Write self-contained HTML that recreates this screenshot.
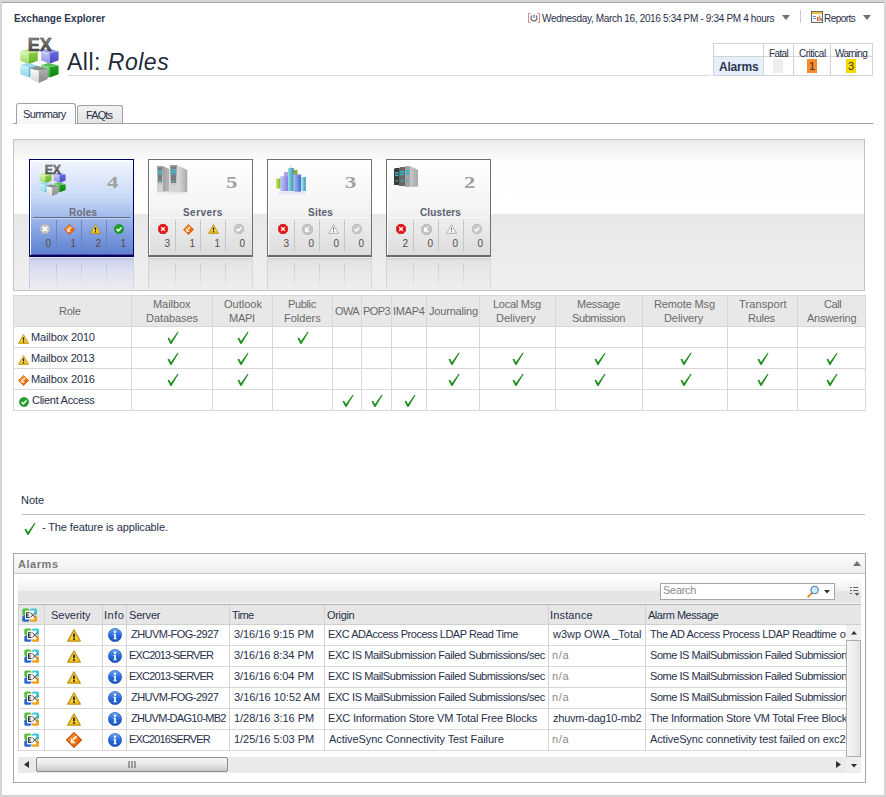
<!DOCTYPE html>
<html><head><meta charset="utf-8">
<style>
*{margin:0;padding:0;box-sizing:border-box}
html,body{width:886px;height:797px;overflow:hidden;background:#d5d5d5;font-family:"Liberation Sans",sans-serif;}
.a{position:absolute}
.t{position:absolute;white-space:nowrap;line-height:1;font-size:11px;color:#27304a}
</style></head><body>


<svg width="0" height="0" style="position:absolute">
<defs>
 <linearGradient id="gEX" x1="0" y1="0" x2="0" y2="1"><stop offset="0" stop-color="#a8a8a8"/><stop offset=".55" stop-color="#606060"/><stop offset="1" stop-color="#404040"/></linearGradient>
 <linearGradient id="gG" x1="0" y1="0" x2="1" y2="0"><stop offset="0" stop-color="#c8f090"/><stop offset="1" stop-color="#70c030"/></linearGradient>
 <linearGradient id="gB" x1="0" y1="0" x2="1" y2="0"><stop offset="0" stop-color="#b8b8f8"/><stop offset="1" stop-color="#5050d0"/></linearGradient>
 <linearGradient id="gC" x1="0" y1="0" x2="1" y2="0"><stop offset="0" stop-color="#c0ecf8"/><stop offset="1" stop-color="#50b0d0"/></linearGradient>
 <linearGradient id="gD" x1="0" y1="0" x2="1" y2="0"><stop offset="0" stop-color="#60d060"/><stop offset="1" stop-color="#109010"/></linearGradient>
 <linearGradient id="gS" x1="0" y1="0" x2="1" y2="0"><stop offset="0" stop-color="#f8f8f8"/><stop offset="1" stop-color="#808080"/></linearGradient>
 <linearGradient id="gGl" x1="0" y1="0" x2="0" y2="1"><stop offset="0" stop-color="#d8f8b0"/><stop offset="1" stop-color="#98d860"/></linearGradient>
 <linearGradient id="gGr" x1="0" y1="0" x2="0" y2="1"><stop offset="0" stop-color="#90d048"/><stop offset="1" stop-color="#60b028"/></linearGradient>
 <linearGradient id="gBl" x1="0" y1="0" x2="0" y2="1"><stop offset="0" stop-color="#c8c8f8"/><stop offset="1" stop-color="#9090e8"/></linearGradient>
 <linearGradient id="gBr" x1="0" y1="0" x2="0" y2="1"><stop offset="0" stop-color="#6a6ae0"/><stop offset="1" stop-color="#4848c0"/></linearGradient>
 <linearGradient id="gCl" x1="0" y1="0" x2="0" y2="1"><stop offset="0" stop-color="#c8eef8"/><stop offset="1" stop-color="#90d4ec"/></linearGradient>
 <linearGradient id="gCr" x1="0" y1="0" x2="0" y2="1"><stop offset="0" stop-color="#70c4e0"/><stop offset="1" stop-color="#48a8c8"/></linearGradient>
 <linearGradient id="gDl" x1="0" y1="0" x2="0" y2="1"><stop offset="0" stop-color="#70d870"/><stop offset="1" stop-color="#30a830"/></linearGradient>
 <linearGradient id="gDr" x1="0" y1="0" x2="0" y2="1"><stop offset="0" stop-color="#28a028"/><stop offset="1" stop-color="#088008"/></linearGradient>
 <linearGradient id="gSl" x1="0" y1="0" x2="0" y2="1"><stop offset="0" stop-color="#fafafa"/><stop offset="1" stop-color="#d8d8d8"/></linearGradient>
 <linearGradient id="gSr" x1="0" y1="0" x2="0" y2="1"><stop offset="0" stop-color="#b0b0b0"/><stop offset="1" stop-color="#888888"/></linearGradient>
 <symbol id="cubes" viewBox="0 0 44 50">
  <path d="M2.3 15.2 L10.8 17.2 L10.8 28.3 L2.3 24.7Z" fill="url(#gGl)"/><path d="M10.8 17.2 L19.8 15.7 L19.8 24.7 L10.8 28.3Z" fill="url(#gGr)"/><path d="M2.3 15.2 L9.5 13.0 L19.8 15.7 L10.8 17.2Z" fill="#c8ec98"/><path d="M3.3 17.0 L9.3 18.5" stroke="#fff" stroke-opacity=".35" stroke-width="1"/><path d="M23.1 14.7 L31.6 16.7 L31.6 27.8 L23.1 24.2Z" fill="url(#gBl)"/><path d="M31.6 16.7 L40.6 15.2 L40.6 24.2 L31.6 27.8Z" fill="url(#gBr)"/><path d="M23.1 14.7 L30.3 12.5 L40.6 15.2 L31.6 16.7Z" fill="#9898e8"/><path d="M24.1 16.5 L30.1 18.0" stroke="#fff" stroke-opacity=".35" stroke-width="1"/><path d="M2.3 29.1 L10.8 31.0 L10.8 41.6 L2.3 38.2Z" fill="url(#gCl)"/><path d="M10.8 31.0 L19.8 29.6 L19.8 38.2 L10.8 41.6Z" fill="url(#gCr)"/><path d="M2.3 29.1 L9.5 27.0 L19.8 29.6 L10.8 31.0Z" fill="#98d8ec"/><path d="M3.3 30.8 L9.3 32.2" stroke="#fff" stroke-opacity=".35" stroke-width="1"/><path d="M23.1 29.1 L31.6 31.0 L31.6 41.6 L23.1 38.2Z" fill="url(#gDl)"/><path d="M31.6 31.0 L40.6 29.6 L40.6 38.2 L31.6 41.6Z" fill="url(#gDr)"/><path d="M23.1 29.1 L30.3 27.0 L40.6 29.6 L31.6 31.0Z" fill="#58c058"/><path d="M24.1 30.8 L30.1 32.2" stroke="#fff" stroke-opacity=".35" stroke-width="1"/><path d="M12.3 32.4 L20.8 34.6 L20.8 46.9 L12.3 42.9Z" fill="url(#gSl)"/><path d="M20.8 34.6 L29.8 33.0 L29.8 42.9 L20.8 46.9Z" fill="url(#gSr)"/><path d="M12.3 32.4 L19.5 30.0 L29.8 33.0 L20.8 34.6Z" fill="#8c8c8c"/><path d="M13.3 34.4 L19.3 36.1" stroke="#fff" stroke-opacity=".35" stroke-width="1"/>
  <text x="21.8" y="15" text-anchor="middle" font-family="Liberation Sans" font-weight="bold" font-size="18" fill="url(#gEX)" stroke="#303030" stroke-width=".5">EX</text>
 </symbol>
 <symbol id="xgray" viewBox="0 0 10 10"><path d="M3 0.3H7L9.7 3V7L7 9.7H3L0.3 7V3Z" fill="#c4c4c4" stroke="#a8a8a8" stroke-width=".5"/><path d="M2.8 2.8L7.2 7.2M7.2 2.8L2.8 7.2" stroke="#fff" stroke-width="1.7"/></symbol>
 <symbol id="xred" viewBox="0 0 10 10"><path d="M3 0.3H7L9.7 3V7L7 9.7H3L0.3 7V3Z" fill="#e81818" stroke="#b00000" stroke-width=".5"/><path d="M3.2 3.2L6.8 6.8M6.8 3.2L3.2 6.8" stroke="#fff" stroke-width="1.3"/></symbol>
 <linearGradient id="gOr" x1="0" y1="0" x2="1" y2="1"><stop offset="0" stop-color="#ffb040"/><stop offset=".5" stop-color="#f67810"/><stop offset="1" stop-color="#e85800"/></linearGradient>
 <symbol id="diaor" viewBox="0 0 12 12"><path d="M6 0.5L11.5 6L6 11.5L0.5 6Z" fill="url(#gOr)" stroke="#c84c00" stroke-width=".8" stroke-linejoin="round"/><path d="M7.8 3.3L5.3 5.8" stroke="#fff" stroke-width="1.4"/><path d="M3.6 4.6V8.4H7.4Z" fill="#fff"/></symbol>
 <symbol id="diagray" viewBox="0 0 12 12"><path d="M3.5 0.5H8.5L11.5 3.5V8.5L8.5 11.5H3.5L0.5 8.5V3.5Z" fill="#c4c4c4" stroke="#a8a8a8" stroke-width=".6"/><path d="M7.6 3.2L5.2 5.6M4 4.6V7.8H7.2Z" stroke="#fff" stroke-width="1.3" fill="#fff"/></symbol>
 <linearGradient id="gWn" x1="0" y1="0" x2="0" y2="1"><stop offset="0" stop-color="#fff0a0"/><stop offset=".45" stop-color="#fbd840"/><stop offset="1" stop-color="#f0c020"/></linearGradient>
 <symbol id="warn" viewBox="0 0 12 11"><path d="M6 0.7L11.4 10.3H0.6Z" fill="url(#gWn)" stroke="#c09010" stroke-width="1" stroke-linejoin="round"/><path d="M6 3.7V6.9" stroke="#111" stroke-width="1.4"/><rect x="5.3" y="7.8" width="1.4" height="1.4" fill="#111"/></symbol>
 <symbol id="warngray" viewBox="0 0 12 11"><path d="M6 0.8L11.4 10.3H0.6Z" fill="#f6f6f6" stroke="#a8a8a8" stroke-width=".9" stroke-linejoin="round"/><path d="M6 3.8V6.9" stroke="#707070" stroke-width="1.1"/><rect x="5.45" y="7.9" width="1.1" height="1.1" fill="#707070"/></symbol>
 <symbol id="chkgreen" viewBox="0 0 10 10"><circle cx="5" cy="5" r="4.6" fill="#1ea12a" stroke="#0c7a14" stroke-width=".5"/><path d="M2.6 5.1L4.3 6.8L7.5 3.4" stroke="#fff" stroke-width="1.5" fill="none"/></symbol>
 <symbol id="chkgray" viewBox="0 0 10 10"><path d="M3 0.3H7L9.7 3V7L7 9.7H3L0.3 7V3Z" fill="#c8c8c8" stroke="#a8a8a8" stroke-width=".5"/><path d="M2.6 5.1L4.3 6.8L7.5 3.4" stroke="#fff" stroke-width="1.5" fill="none"/></symbol>
 <symbol id="check" viewBox="0 0 13 13"><path d="M1.6 7.6 Q2.3 6.3 3.3 7.1 L5 9.9 L11.6 0.8 Q12.6 0.6 12.4 1.6 L5.8 12.6 Q5 13.6 4.3 12.7Z" fill="#1f901f"/></symbol>
 <linearGradient id="gInfo" x1="0" y1="0" x2="0" y2="1"><stop offset="0" stop-color="#6aa8f8"/><stop offset=".5" stop-color="#2a6ae0"/><stop offset="1" stop-color="#1850c0"/></linearGradient>
 <symbol id="info" viewBox="0 0 14 14"><circle cx="7" cy="7" r="6.6" fill="url(#gInfo)" stroke="#1848a8" stroke-width=".6"/><circle cx="7" cy="3.7" r="1.2" fill="#fff"/><path d="M5.3 5.8H7.9V10.4H9V11.3H5.2V10.4H6.2V6.7H5.3Z" fill="#fff"/></symbol>
 <symbol id="exg" viewBox="0 0 15 14">
  <rect x="0.3" y="0.4" width="7" height="6.6" rx="1.6" fill="#50c038"/><rect x="8" y="0.4" width="7" height="6.6" rx="1.6" fill="#38c8d8"/>
  <rect x="0.3" y="7.2" width="7" height="6.6" rx="1.6" fill="#2a64d0"/><rect x="8" y="7.2" width="7" height="6.6" rx="1.6" fill="#f0a010"/>
  <rect x="3" y="2.6" width="4.5" height="4.6" rx="1" fill="#fff"/><rect x="8" y="2.6" width="4.5" height="4.6" rx="1" fill="#fff"/>
  <rect x="3" y="7" width="4.5" height="4.4" rx="1" fill="#fff"/><rect x="8" y="7" width="4.5" height="4.4" rx="1" fill="#fff"/>
  <path d="M7.3 4.7H4.6V9.4H7.3M4.6 7H6.9" stroke="#2a2a2a" stroke-width="1.1" fill="none"/>
  <path d="M8.4 4.5L13 9.5M13 4.5L8.4 9.5" stroke="#2a2a2a" stroke-width=".9" fill="none"/>
 </symbol>
</defs></svg>

<div class="a" style="left:2px;top:2px;width:882px;height:793px;background:#fff;border-top:1px solid #a3a3a3;"></div>
<div class="t" id="appt" style="left:14px;top:14px;font-size:10px;color:#2c3650;font-weight:bold;letter-spacing:0.036px;">Exchange Explorer</div>
<svg class="a" style="left:528px;top:13px" width="12" height="10" viewBox="0 0 12 10">
 <path d="M2.5 0.5H0.5V9.5H2.5M9.5 0.5H11.5V9.5H9.5" fill="none" stroke="#d88888" stroke-width="1"/>
 <path d="M4.2 2.6A3 3 0 1 0 7.8 2.6" fill="none" stroke="#6a6a6a" stroke-width="1.2"/>
 <path d="M6 1.5V5" fill="none" stroke="#3a6ac8" stroke-width="1.1"/></svg>
<div class="t" id="datet" style="left:542px;top:14px;font-size:10px;color:#27304a;letter-spacing:-0.334px;">Wednesday, March 16, 2016 5:34 PM - 9:34 PM 4 hours</div>
<svg class="a" style="left:782px;top:15px" width="8" height="5"><path d="M0 0H8L4 5Z" fill="#707070"/></svg>
<div class="a" style="left:800px;top:10px;width:1px;height:13px;background:#c8c8c8"></div>
<svg class="a" style="left:811px;top:11px" width="12" height="12" viewBox="0 0 12 12">
 <rect x="0.5" y="0.5" width="11" height="11" fill="#fafafa" stroke="#6a6a6a"/>
 <rect x="1" y="1" width="10" height="2" fill="#f0c040"/>
 <rect x="2" y="5" width="3" height="1" fill="#6090d0"/><rect x="2" y="7" width="3" height="1" fill="#6090d0"/>
 <rect x="6" y="6" width="1.5" height="4" fill="#e05030"/><rect x="8" y="4.5" width="1.5" height="5.5" fill="#f0a030"/><rect x="9.6" y="7" width="1.2" height="3" fill="#5080c0"/></svg>
<div class="t" id="rept" style="left:824px;top:14px;font-size:10px;color:#27304a;letter-spacing:-0.55px;">Reports</div>
<svg class="a" style="left:863px;top:15px" width="8" height="5"><path d="M0 0H8L4 5Z" fill="#707070"/></svg>
<svg class="a" style="left:18px;top:36px;" width="44" height="50"><use href="#cubes" width="44" height="50"/></svg>
<div class="t" id="title" style="left:67px;top:51px;font-size:23px;color:#222a3a;letter-spacing:0.5px;">All: <i>Roles</i></div>
<div class="a" style="left:68px;top:75px;width:643px;height:1px;background:#dcdcdc"></div>
<div class="a" style="left:713px;top:43px;width:160px;height:33px;border:1px solid #d4d4d4"></div>
<div class="a" style="left:713px;top:56px;width:160px;height:1px;background:#d4d4d4"></div>
<div class="a" style="left:714px;top:57px;width:49px;height:18px;background:#e6f0fc"></div>
<div class="a" style="left:763px;top:43px;width:1px;height:33px;background:#d4d4d4"></div>
<div class="a" style="left:793px;top:43px;width:1px;height:33px;background:#d4d4d4"></div>
<div class="a" style="left:830px;top:43px;width:1px;height:33px;background:#d4d4d4"></div>
<div class="t" id="alt" style="left:719px;top:61px;font-size:12px;color:#2c3650;font-weight:bold;letter-spacing:-0.216px;">Alarms</div>
<div class="t" id="sfatal" style="left:769px;top:49px;font-size:10px;color:#27304a;letter-spacing:-0.628px;">Fatal</div>
<div class="t" id="scrit" style="left:799px;top:49px;font-size:10px;color:#27304a;letter-spacing:-0.488px;">Critical</div>
<div class="t" id="swarn" style="left:835px;top:49px;font-size:10px;color:#27304a;letter-spacing:-0.69px;">Warning</div>
<div class="a" style="left:773px;top:59px;width:10px;height:14px;background:#eeeeee"></div>
<div class="a" style="left:807px;top:59px;width:10px;height:14px;background:#f68c2c"></div>
<div class="a" style="left:846px;top:59px;width:10px;height:14px;background:#f8d800"></div>
<div class="t" id="s1" style="left:809px;top:61px;font-size:11px;color:#333;">1</div>
<div class="t" id="s3" style="left:848px;top:61px;font-size:11px;color:#333;">3</div>
<div class="a" style="left:13px;top:123px;width:860px;height:1px;background:#a0a2aa"></div>
<div class="a" style="left:16px;top:103px;width:60px;height:21px;border:1px solid #a0a2aa;border-bottom:none;border-radius:3px 3px 0 0;background:linear-gradient(#fff,#f6f6f6)"></div>
<div class="a" style="left:77px;top:105px;width:46px;height:18px;border:1px solid #a0a2aa;border-bottom:none;border-radius:3px 3px 0 0;background:linear-gradient(#f2f2f2,#e4e4e4)"></div>
<div class="t" id="tab1" style="left:23px;top:109px;font-size:11px;color:#27304a;letter-spacing:-0.63px;">Summary</div>
<div class="t" id="tab2" style="left:86px;top:110px;font-size:11px;color:#27304a;letter-spacing:-0.899px;">FAQts</div>
<div class="a" style="left:13px;top:139px;width:852px;height:152px;border:1px solid #c4c4c4;background:linear-gradient(#ebebeb 0px,#fdfdfd 22px,#fff 74px,#e8e8e8 74px,#efefef 100%)"></div>
<div class="a" style="left:29px;top:159px;width:105px;height:98px;background:linear-gradient(#f2f7ff 0%,#c8d8f6 40%,#a4bcec 58%,#7c9ade 80%,#5d82d0 calc(100% - 1px),#5048a0 calc(100% - 1px));border:1px solid #000066;border-bottom:2px solid #000060;box-shadow:inset 1px 1px 0 #fff"></div>
<div class="a" style="left:29px;top:258px;width:105px;height:31px;background:linear-gradient(#b4b8d8 0px,#ccd2ec 2px,#dde0f0 12px,#ebebf0 100%);border-left:1px solid #c8cce0;border-right:1px solid #d0d4e4"></div>
<div class="a" style="left:56px;top:263px;width:1px;height:23px;background:linear-gradient(#b8c0e0,#e4e6f0)"></div>
<div class="a" style="left:81px;top:263px;width:1px;height:23px;background:linear-gradient(#b8c0e0,#e4e6f0)"></div>
<div class="a" style="left:106px;top:263px;width:1px;height:23px;background:linear-gradient(#b8c0e0,#e4e6f0)"></div>
<div class="t" id="num_Roles" style="left:107px;top:174px;font-size:17px;color:#a0a0a0;font-weight:bold;font-family:'Liberation Serif',serif;transform:scaleX(1.33);transform-origin:0 0;">4</div>
<div class="t" id="lab_Roles" style="left:69px;top:208px;font-size:10px;color:#6e6e78;font-weight:bold;letter-spacing:0.206px;">Roles</div>
<div class="a" style="left:33px;top:217px;width:97px;height:1px;background:#606878"></div>
<div class="a" style="left:33px;top:218px;width:97px;height:1px;background:#c4d4f4"></div>
<div class="a" style="left:56px;top:220px;width:1px;height:31px;background:#6a84c0"></div>
<div class="a" style="left:81px;top:220px;width:1px;height:31px;background:#6a84c0"></div>
<div class="a" style="left:106px;top:220px;width:1px;height:31px;background:#6a84c0"></div>
<svg class="a" style="left:40px;top:224px;" width="10" height="10"><use href="#xgray" width="10" height="10"/></svg>
<div class="t" style="left:45px;top:239px;font-size:10px;color:#5a4a3a;text-align:right;width:6px;">0</div>
<svg class="a" style="left:64px;top:224px;" width="11" height="11"><use href="#diaor" width="11" height="11"/></svg>
<div class="t" style="left:70px;top:239px;font-size:10px;color:#5a4a3a;text-align:right;width:6px;">1</div>
<svg class="a" style="left:90px;top:224px;" width="11" height="10"><use href="#warn" width="11" height="10"/></svg>
<div class="t" style="left:95px;top:239px;font-size:10px;color:#5a4a3a;text-align:right;width:6px;">2</div>
<svg class="a" style="left:114px;top:224px;" width="10" height="10"><use href="#chkgreen" width="10" height="10"/></svg>
<div class="t" style="left:120px;top:239px;font-size:10px;color:#5a4a3a;text-align:right;width:6px;">1</div>
<div class="a" style="left:148px;top:159px;width:105px;height:98px;background:linear-gradient(#ffffff 0%,#f4f4f4 50%,#dcdcdc 100%);border:1px solid #707074;border-bottom:2px solid #6a6a6e;box-shadow:inset 1px 1px 0 #fff"></div>
<div class="a" style="left:148px;top:258px;width:105px;height:31px;background:linear-gradient(#cfcfcf 0px,#e2e2e2 2px,#e8e8e8 12px,#ededed 100%);border-left:1px solid #d4d4d4;border-right:1px solid #d8d8d8"></div>
<div class="a" style="left:175px;top:263px;width:1px;height:23px;background:linear-gradient(#cacaca,#e6e6e6)"></div>
<div class="a" style="left:200px;top:263px;width:1px;height:23px;background:linear-gradient(#cacaca,#e6e6e6)"></div>
<div class="a" style="left:225px;top:263px;width:1px;height:23px;background:linear-gradient(#cacaca,#e6e6e6)"></div>
<div class="t" id="num_Servers" style="left:226px;top:174px;font-size:17px;color:#a0a0a0;font-weight:bold;font-family:'Liberation Serif',serif;transform:scaleX(1.33);transform-origin:0 0;">5</div>
<div class="t" id="lab_Servers" style="left:183px;top:208px;font-size:10px;color:#5a6070;font-weight:bold;letter-spacing:0.45px;">Servers</div>
<div class="a" style="left:152px;top:217px;width:97px;height:1px;background:#fafafa"></div>
<div class="a" style="left:175px;top:220px;width:1px;height:31px;background:#c6c6c6"></div>
<div class="a" style="left:200px;top:220px;width:1px;height:31px;background:#c6c6c6"></div>
<div class="a" style="left:225px;top:220px;width:1px;height:31px;background:#c6c6c6"></div>
<svg class="a" style="left:158px;top:224px;" width="10" height="10"><use href="#xred" width="10" height="10"/></svg>
<div class="t" style="left:164px;top:239px;font-size:10px;color:#5a4a4a;text-align:right;width:6px;">3</div>
<svg class="a" style="left:183px;top:224px;" width="11" height="11"><use href="#diaor" width="11" height="11"/></svg>
<div class="t" style="left:189px;top:239px;font-size:10px;color:#5a4a4a;text-align:right;width:6px;">1</div>
<svg class="a" style="left:208px;top:224px;" width="11" height="10"><use href="#warn" width="11" height="10"/></svg>
<div class="t" style="left:214px;top:239px;font-size:10px;color:#5a4a4a;text-align:right;width:6px;">1</div>
<svg class="a" style="left:234px;top:224px;" width="10" height="10"><use href="#chkgray" width="10" height="10"/></svg>
<div class="t" style="left:239px;top:239px;font-size:10px;color:#5a4a4a;text-align:right;width:6px;">0</div>
<div class="a" style="left:267px;top:159px;width:105px;height:98px;background:linear-gradient(#ffffff 0%,#f4f4f4 50%,#dcdcdc 100%);border:1px solid #707074;border-bottom:2px solid #6a6a6e;box-shadow:inset 1px 1px 0 #fff"></div>
<div class="a" style="left:267px;top:258px;width:105px;height:31px;background:linear-gradient(#cfcfcf 0px,#e2e2e2 2px,#e8e8e8 12px,#ededed 100%);border-left:1px solid #d4d4d4;border-right:1px solid #d8d8d8"></div>
<div class="a" style="left:294px;top:263px;width:1px;height:23px;background:linear-gradient(#cacaca,#e6e6e6)"></div>
<div class="a" style="left:319px;top:263px;width:1px;height:23px;background:linear-gradient(#cacaca,#e6e6e6)"></div>
<div class="a" style="left:344px;top:263px;width:1px;height:23px;background:linear-gradient(#cacaca,#e6e6e6)"></div>
<div class="t" id="num_Sites" style="left:345px;top:174px;font-size:17px;color:#a0a0a0;font-weight:bold;font-family:'Liberation Serif',serif;transform:scaleX(1.33);transform-origin:0 0;">3</div>
<div class="t" id="lab_Sites" style="left:308px;top:208px;font-size:10px;color:#5a6070;font-weight:bold;letter-spacing:0.225px;">Sites</div>
<div class="a" style="left:271px;top:217px;width:97px;height:1px;background:#fafafa"></div>
<div class="a" style="left:294px;top:220px;width:1px;height:31px;background:#c6c6c6"></div>
<div class="a" style="left:319px;top:220px;width:1px;height:31px;background:#c6c6c6"></div>
<div class="a" style="left:344px;top:220px;width:1px;height:31px;background:#c6c6c6"></div>
<svg class="a" style="left:278px;top:224px;" width="10" height="10"><use href="#xred" width="10" height="10"/></svg>
<div class="t" style="left:283px;top:239px;font-size:10px;color:#5a4a4a;text-align:right;width:6px;">3</div>
<svg class="a" style="left:302px;top:224px;" width="11" height="11"><use href="#diagray" width="11" height="11"/></svg>
<div class="t" style="left:308px;top:239px;font-size:10px;color:#5a4a4a;text-align:right;width:6px;">0</div>
<svg class="a" style="left:328px;top:224px;" width="11" height="10"><use href="#warngray" width="11" height="10"/></svg>
<div class="t" style="left:333px;top:239px;font-size:10px;color:#5a4a4a;text-align:right;width:6px;">0</div>
<svg class="a" style="left:352px;top:224px;" width="10" height="10"><use href="#chkgray" width="10" height="10"/></svg>
<div class="t" style="left:358px;top:239px;font-size:10px;color:#5a4a4a;text-align:right;width:6px;">0</div>
<div class="a" style="left:386px;top:159px;width:105px;height:98px;background:linear-gradient(#ffffff 0%,#f4f4f4 50%,#dcdcdc 100%);border:1px solid #707074;border-bottom:2px solid #6a6a6e;box-shadow:inset 1px 1px 0 #fff"></div>
<div class="a" style="left:386px;top:258px;width:105px;height:31px;background:linear-gradient(#cfcfcf 0px,#e2e2e2 2px,#e8e8e8 12px,#ededed 100%);border-left:1px solid #d4d4d4;border-right:1px solid #d8d8d8"></div>
<div class="a" style="left:413px;top:263px;width:1px;height:23px;background:linear-gradient(#cacaca,#e6e6e6)"></div>
<div class="a" style="left:438px;top:263px;width:1px;height:23px;background:linear-gradient(#cacaca,#e6e6e6)"></div>
<div class="a" style="left:463px;top:263px;width:1px;height:23px;background:linear-gradient(#cacaca,#e6e6e6)"></div>
<div class="t" id="num_Clusters" style="left:464px;top:174px;font-size:17px;color:#a0a0a0;font-weight:bold;font-family:'Liberation Serif',serif;transform:scaleX(1.33);transform-origin:0 0;">2</div>
<div class="t" id="lab_Clusters" style="left:420px;top:208px;font-size:10px;color:#5a6070;font-weight:bold;letter-spacing:0.128px;">Clusters</div>
<div class="a" style="left:390px;top:217px;width:97px;height:1px;background:#fafafa"></div>
<div class="a" style="left:413px;top:220px;width:1px;height:31px;background:#c6c6c6"></div>
<div class="a" style="left:438px;top:220px;width:1px;height:31px;background:#c6c6c6"></div>
<div class="a" style="left:463px;top:220px;width:1px;height:31px;background:#c6c6c6"></div>
<svg class="a" style="left:396px;top:224px;" width="10" height="10"><use href="#xred" width="10" height="10"/></svg>
<div class="t" style="left:402px;top:239px;font-size:10px;color:#5a4a4a;text-align:right;width:6px;">2</div>
<svg class="a" style="left:421px;top:224px;" width="11" height="11"><use href="#diagray" width="11" height="11"/></svg>
<div class="t" style="left:427px;top:239px;font-size:10px;color:#5a4a4a;text-align:right;width:6px;">0</div>
<svg class="a" style="left:446px;top:224px;" width="11" height="10"><use href="#warngray" width="11" height="10"/></svg>
<div class="t" style="left:452px;top:239px;font-size:10px;color:#5a4a4a;text-align:right;width:6px;">0</div>
<svg class="a" style="left:472px;top:224px;" width="10" height="10"><use href="#chkgray" width="10" height="10"/></svg>
<div class="t" style="left:477px;top:239px;font-size:10px;color:#5a4a4a;text-align:right;width:6px;">0</div>
<svg class="a" style="left:38.4px;top:163.5px" width="30" height="34"><use href="#cubes" width="30" height="34"/></svg>
<svg class="a" style="left:150px;top:160px" width="45" height="38" viewBox="150 160 45 38">
 <defs>
  <linearGradient id="svS1" x1="0" x2="1"><stop offset="0" stop-color="#8a8a8a"/><stop offset="1" stop-color="#b8b8b8"/></linearGradient>
  <linearGradient id="svS2" x1="0" x2="1"><stop offset="0" stop-color="#e8e8e8"/><stop offset=".6" stop-color="#d0d0d0"/><stop offset="1" stop-color="#a8a8a8"/></linearGradient>
  <linearGradient id="svF" x1="0" y1="0" x2="0" y2="1"><stop offset="0" stop-color="#9a9a9a"/><stop offset=".6" stop-color="#c8c8c8"/><stop offset="1" stop-color="#d8d8d8"/></linearGradient>
 </defs>
 <path d="M157 166.5 L162.5 166 L169.5 169 L169.5 191.5 L157 191.5Z" fill="url(#svS1)"/>
 <rect x="157" y="166.3" width="6" height="25.2" fill="url(#svF)"/>
 <rect x="158" y="167.5" width="4" height="15" fill="#7c7c7c"/>
 <rect x="158" y="170" width="4" height="1.2" fill="#40c4d8"/><rect x="158" y="172" width="4" height="1.2" fill="#40c4d8"/><rect x="158" y="174" width="4" height="1" fill="#40b0c8"/>
 <rect x="159" y="180.5" width="2" height="1.5" fill="#40c4d8"/>
 <path d="M170 165 L176.5 164.8 L187.3 170 L187.3 192 L177 193 L170 192.5Z" fill="url(#svS2)"/>
 <rect x="170" y="165" width="7" height="27.8" fill="url(#svF)"/>
 <rect x="171" y="166.5" width="5" height="16.5" fill="#7a7a7a"/>
 <rect x="171" y="169" width="5" height="1.4" fill="#40c4d8"/><rect x="171" y="171.3" width="5" height="1.4" fill="#40c4d8"/><rect x="171" y="173.5" width="5" height="1.2" fill="#40b0c8"/>
 <rect x="172.5" y="180.5" width="2" height="1.6" fill="#40c4d8"/>
 <rect x="157" y="192" width="30" height="3" fill="#e8e8e8" opacity=".6"/>
</svg>
<svg class="a" style="left:272px;top:162px" width="38" height="34" viewBox="272 162 38 34">
 <defs>
  <linearGradient id="stA" x1="0" x2="1"><stop offset="0" stop-color="#c8c8f8"/><stop offset="1" stop-color="#7878d8"/></linearGradient>
  <linearGradient id="stB" x1="0" x2="1"><stop offset="0" stop-color="#98e0ec"/><stop offset="1" stop-color="#3890a8"/></linearGradient>
  <linearGradient id="stC" x1="0" x2="1"><stop offset="0" stop-color="#a8c0f8"/><stop offset="1" stop-color="#4868c8"/></linearGradient>
  <linearGradient id="stD" x1="0" x2="1"><stop offset="0" stop-color="#b8eef8"/><stop offset="1" stop-color="#3898b8"/></linearGradient>
  <linearGradient id="stE" x1="0" x2="1"><stop offset="0" stop-color="#c0f070"/><stop offset="1" stop-color="#70b020"/></linearGradient>
 </defs>
 <rect x="276" y="178.5" width="5" height="10" fill="url(#stE)"/>
 <rect x="284" y="172" width="4.5" height="5" fill="#b0a0e0"/>
 <rect x="293.5" y="170" width="4" height="5" fill="#90a840"/>
 <rect x="280.2" y="176.3" width="8.6" height="14.8" fill="url(#stA)"/>
 <rect x="290.2" y="165" width="1.6" height="3" fill="#c8f0f8"/>
 <rect x="288" y="168" width="5.8" height="23" fill="url(#stB)"/>
 <rect x="293.5" y="174.5" width="7.5" height="17.3" fill="url(#stC)"/>
 <rect x="301" y="177" width="4.8" height="14" fill="url(#stD)"/>
 <rect x="278" y="191.5" width="28" height="3" fill="#c8d0f0" opacity=".35"/>
</svg>
<svg class="a" style="left:390px;top:162px" width="32" height="28" viewBox="390 162 32 28">
 <defs>
  <linearGradient id="clS" x1="0" x2="1"><stop offset="0" stop-color="#dcdcdc"/><stop offset="1" stop-color="#a8a8a8"/></linearGradient>
 </defs>
 <path d="M394 169 L395.5 168 L399 168 L399 185 L394 185Z" fill="#3a3a3a"/>
 <path d="M399 168 L400.5 167 L405 167 L405 186 L399 186Z" fill="#686868"/>
 <path d="M405 166.2 L410 166 L418 170 L418 186.6 L410 187 L405 186.6Z" fill="url(#clS)"/>
 <rect x="405" y="166.2" width="5" height="20.6" fill="#a4a4a4"/>
 <rect x="395" y="172" width="3.5" height="1.6" fill="#2ab8d0"/><rect x="395" y="174.5" width="3.5" height="1.6" fill="#2ab8d0"/><rect x="396" y="180" width="1.6" height="1.6" fill="#2ab8d0"/>
 <rect x="400" y="171" width="4.2" height="1.6" fill="#2ab8d0"/><rect x="400" y="173.6" width="4.2" height="1.6" fill="#2ab8d0"/><rect x="401" y="180" width="2.4" height="1.4" fill="#2ab8d0"/>
 <rect x="406" y="170" width="3.6" height="1.8" fill="#2ab8d0"/><rect x="406" y="172.8" width="3.6" height="1.8" fill="#2ab8d0"/><rect x="406.5" y="180" width="2.6" height="1.4" fill="#2ab8d0"/>
</svg>
<div class="a" style="left:13px;top:295px;width:853px;height:116px;border:1px solid #d8d8d8;background:#fff"></div>
<div class="a" style="left:14px;top:296px;width:851px;height:30px;background:#e8e8e8"></div>
<div class="a" style="left:13px;top:326px;width:853px;height:1px;background:#d8d8d8"></div>
<div class="a" style="left:13px;top:347px;width:853px;height:1px;background:#d8d8d8"></div>
<div class="a" style="left:13px;top:368px;width:853px;height:1px;background:#d8d8d8"></div>
<div class="a" style="left:13px;top:389px;width:853px;height:1px;background:#d8d8d8"></div>
<div class="a" style="left:131px;top:295px;width:1px;height:116px;background:#d8d8d8"></div>
<div class="a" style="left:212px;top:295px;width:1px;height:116px;background:#d8d8d8"></div>
<div class="a" style="left:272px;top:295px;width:1px;height:116px;background:#d8d8d8"></div>
<div class="a" style="left:332px;top:295px;width:1px;height:116px;background:#d8d8d8"></div>
<div class="a" style="left:361px;top:295px;width:1px;height:116px;background:#d8d8d8"></div>
<div class="a" style="left:391px;top:295px;width:1px;height:116px;background:#d8d8d8"></div>
<div class="a" style="left:426px;top:295px;width:1px;height:116px;background:#d8d8d8"></div>
<div class="a" style="left:479px;top:295px;width:1px;height:116px;background:#d8d8d8"></div>
<div class="a" style="left:555px;top:295px;width:1px;height:116px;background:#d8d8d8"></div>
<div class="a" style="left:642px;top:295px;width:1px;height:116px;background:#d8d8d8"></div>
<div class="a" style="left:727px;top:295px;width:1px;height:116px;background:#d8d8d8"></div>
<div class="a" style="left:797px;top:295px;width:1px;height:116px;background:#d8d8d8"></div>
<div class="t" id="h0_0" style="left:59px;top:306px;font-size:11px;color:#6a6a6a;letter-spacing:-0.24px;">Role</div>
<div class="t" id="h1_0" style="left:153px;top:299px;font-size:11px;color:#6a6a6a;letter-spacing:-0.06px;">Mailbox</div>
<div class="t" id="h1_1" style="left:146px;top:313px;font-size:11px;color:#6a6a6a;letter-spacing:-0.067px;">Databases</div>
<div class="t" id="h2_0" style="left:224px;top:299px;font-size:11px;color:#6a6a6a;">Outlook</div>
<div class="t" id="h2_1" style="left:229px;top:313px;font-size:11px;color:#6a6a6a;letter-spacing:-0.24px;">MAPI</div>
<div class="t" id="h3_0" style="left:288px;top:299px;font-size:11px;color:#6a6a6a;letter-spacing:-0.36px;">Public</div>
<div class="t" id="h3_1" style="left:284px;top:313px;font-size:11px;color:#6a6a6a;">Folders</div>
<div class="t" id="h4_0" style="left:335px;top:306px;font-size:11px;color:#6a6a6a;letter-spacing:-0.63px;">OWA</div>
<div class="t" id="h5_0" style="left:363px;top:306px;font-size:11px;color:#6a6a6a;letter-spacing:-0.6px;">POP3</div>
<div class="t" id="h6_0" style="left:393px;top:306px;font-size:11px;color:#6a6a6a;letter-spacing:-0.27px;">IMAP4</div>
<div class="t" id="h7_0" style="left:429px;top:306px;font-size:11px;color:#6a6a6a;letter-spacing:-0.18px;">Journaling</div>
<div class="t" id="h8_0" style="left:493px;top:299px;font-size:11px;color:#6a6a6a;letter-spacing:-0.249px;">Local Msg</div>
<div class="t" id="h8_1" style="left:496px;top:313px;font-size:11px;color:#6a6a6a;">Delivery</div>
<div class="t" id="h9_0" style="left:577px;top:299px;font-size:11px;color:#6a6a6a;letter-spacing:-0.27px;">Message</div>
<div class="t" id="h9_1" style="left:572px;top:313px;font-size:11px;color:#6a6a6a;letter-spacing:-0.4px;">Submission</div>
<div class="t" id="h10_0" style="left:654px;top:299px;font-size:11px;color:#6a6a6a;letter-spacing:-0.14px;">Remote Msg</div>
<div class="t" id="h10_1" style="left:664px;top:313px;font-size:11px;color:#6a6a6a;letter-spacing:-0.076px;">Delivery</div>
<div class="t" id="h11_0" style="left:739px;top:299px;font-size:11px;color:#6a6a6a;letter-spacing:0.112px;">Transport</div>
<div class="t" id="h11_1" style="left:748px;top:313px;font-size:11px;color:#6a6a6a;letter-spacing:-0.27px;">Rules</div>
<div class="t" id="h12_0" style="left:824px;top:299px;font-size:11px;color:#6a6a6a;letter-spacing:-0.42px;">Call</div>
<div class="t" id="h12_1" style="left:807px;top:313px;font-size:11px;color:#6a6a6a;letter-spacing:-0.225px;">Answering</div>
<svg class="a" style="left:18px;top:334px;" width="11" height="10"><use href="#warn" width="11" height="10"/></svg>
<div class="t" id="role0" style="left:31px;top:332px;font-size:11px;color:#27304a;letter-spacing:-0.132px;">Mailbox 2010</div>
<svg class="a" style="left:166px;top:331px;" width="13" height="13"><use href="#check" width="13" height="13"/></svg>
<svg class="a" style="left:236px;top:331px;" width="13" height="13"><use href="#check" width="13" height="13"/></svg>
<svg class="a" style="left:296px;top:331px;" width="13" height="13"><use href="#check" width="13" height="13"/></svg>
<svg class="a" style="left:18px;top:355px;" width="11" height="10"><use href="#warn" width="11" height="10"/></svg>
<div class="t" id="role1" style="left:31px;top:353px;font-size:11px;color:#27304a;letter-spacing:-0.164px;">Mailbox 2013</div>
<svg class="a" style="left:166px;top:352px;" width="13" height="13"><use href="#check" width="13" height="13"/></svg>
<svg class="a" style="left:236px;top:352px;" width="13" height="13"><use href="#check" width="13" height="13"/></svg>
<svg class="a" style="left:447px;top:352px;" width="13" height="13"><use href="#check" width="13" height="13"/></svg>
<svg class="a" style="left:511px;top:352px;" width="13" height="13"><use href="#check" width="13" height="13"/></svg>
<svg class="a" style="left:593px;top:352px;" width="13" height="13"><use href="#check" width="13" height="13"/></svg>
<svg class="a" style="left:679px;top:352px;" width="13" height="13"><use href="#check" width="13" height="13"/></svg>
<svg class="a" style="left:756px;top:352px;" width="13" height="13"><use href="#check" width="13" height="13"/></svg>
<svg class="a" style="left:825px;top:352px;" width="13" height="13"><use href="#check" width="13" height="13"/></svg>
<svg class="a" style="left:18px;top:375px;" width="11" height="11"><use href="#diaor" width="11" height="11"/></svg>
<div class="t" id="role2" style="left:31px;top:374px;font-size:11px;color:#27304a;letter-spacing:-0.132px;">Mailbox 2016</div>
<svg class="a" style="left:166px;top:373px;" width="13" height="13"><use href="#check" width="13" height="13"/></svg>
<svg class="a" style="left:236px;top:373px;" width="13" height="13"><use href="#check" width="13" height="13"/></svg>
<svg class="a" style="left:447px;top:373px;" width="13" height="13"><use href="#check" width="13" height="13"/></svg>
<svg class="a" style="left:511px;top:373px;" width="13" height="13"><use href="#check" width="13" height="13"/></svg>
<svg class="a" style="left:593px;top:373px;" width="13" height="13"><use href="#check" width="13" height="13"/></svg>
<svg class="a" style="left:679px;top:373px;" width="13" height="13"><use href="#check" width="13" height="13"/></svg>
<svg class="a" style="left:756px;top:373px;" width="13" height="13"><use href="#check" width="13" height="13"/></svg>
<svg class="a" style="left:825px;top:373px;" width="13" height="13"><use href="#check" width="13" height="13"/></svg>
<svg class="a" style="left:19px;top:397px;" width="10" height="10"><use href="#chkgreen" width="10" height="10"/></svg>
<div class="t" id="role3" style="left:32px;top:395px;font-size:11px;color:#27304a;letter-spacing:-0.283px;">Client Access</div>
<svg class="a" style="left:341px;top:394px;" width="13" height="13"><use href="#check" width="13" height="13"/></svg>
<svg class="a" style="left:370px;top:394px;" width="13" height="13"><use href="#check" width="13" height="13"/></svg>
<svg class="a" style="left:403px;top:394px;" width="13" height="13"><use href="#check" width="13" height="13"/></svg>
<div class="t" id="note" style="left:21px;top:495px;font-size:11px;color:#27304a;">Note</div>
<div class="a" style="left:22px;top:514px;width:843px;height:1px;background:#bcbcbc"></div>
<svg class="a" style="left:23px;top:522px;" width="13" height="13"><use href="#check" width="13" height="13"/></svg>
<div class="t" id="notet" style="left:42px;top:522px;font-size:11px;color:#27304a;letter-spacing:-0.128px;">- The feature is applicable.</div>
<div class="a" style="left:13px;top:553px;width:853px;height:230px;border:1px solid #a8a8a8;background:#fff"></div>
<div class="a" style="left:14px;top:554px;width:851px;height:19px;background:linear-gradient(#fbfbfb,#efefef)"></div>
<div class="a" style="left:14px;top:573px;width:851px;height:1px;background:#c8c8c8"></div>
<div class="t" id="alarmsh" style="left:18px;top:559px;font-size:11px;color:#7a7a7a;font-weight:bold;letter-spacing:0.54px;">Alarms</div>
<svg class="a" style="left:853px;top:561px" width="8" height="5"><path d="M0 5H8L4 0Z" fill="#707070"/></svg>
<div class="a" style="left:18px;top:578px;width:843px;height:26px;background:linear-gradient(#fefefe 0px,#efefef 13px,#e4e4e4 13px,#e4e4e4 25px,#f8f8f8 25px)"></div>
<div class="a" style="left:660px;top:583px;width:175px;height:17px;border:1px solid #a4a4a4;background:#fff"></div>
<div class="t" id="search" style="left:663px;top:585px;font-size:11px;color:#8a8a8a;letter-spacing:-0.288px;">Search</div>
<svg class="a" style="left:807px;top:585px" width="13" height="13" viewBox="0 0 13 13"><path d="M5.2 7.6L1.2 11.6" stroke="#e08818" stroke-width="2" stroke-linecap="round"/><circle cx="7.6" cy="5" r="3.8" fill="#c8ecff" stroke="#4a70b0" stroke-width="1"/></svg>
<svg class="a" style="left:824px;top:590px" width="6" height="4"><path d="M0 0H6L3 3.5Z" fill="#303030"/></svg>
<svg class="a" style="left:850px;top:586px" width="10" height="11" viewBox="0 0 10 11"><path d="M0 1.5H1.8M3.2 1.5H8.2M0 4.5H1.8M3.2 4.5H8.2M0 7.5H1.8" stroke="#606060" stroke-width="1"/><path d="M4.5 7H9.5L7 10Z" fill="#606060"/></svg>
<div class="a" style="left:18px;top:604px;width:843px;height:1px;background:#b4b4b4"></div>
<div class="a" style="left:18px;top:605px;width:843px;height:19px;background:#e6e6e6"></div>
<div class="a" style="left:18px;top:624px;width:843px;height:1px;background:#d0d0d0"></div>
<div class="a" style="left:18px;top:605px;width:1px;height:146px;background:#d0d0d0"></div>
<div class="a" style="left:44px;top:605px;width:1px;height:146px;background:#d4d4d4"></div>
<div class="a" style="left:102px;top:605px;width:1px;height:146px;background:#d4d4d4"></div>
<div class="a" style="left:126px;top:605px;width:1px;height:146px;background:#d4d4d4"></div>
<div class="a" style="left:229px;top:605px;width:1px;height:146px;background:#d4d4d4"></div>
<div class="a" style="left:324px;top:605px;width:1px;height:146px;background:#d4d4d4"></div>
<div class="a" style="left:548px;top:605px;width:1px;height:146px;background:#d4d4d4"></div>
<div class="a" style="left:645px;top:605px;width:1px;height:146px;background:#d4d4d4"></div>
<div class="a" style="left:18px;top:645px;width:828px;height:1px;background:#d8d8d8"></div>
<div class="a" style="left:18px;top:666px;width:828px;height:1px;background:#d8d8d8"></div>
<div class="a" style="left:18px;top:687px;width:828px;height:1px;background:#d8d8d8"></div>
<div class="a" style="left:18px;top:708px;width:828px;height:1px;background:#d8d8d8"></div>
<div class="a" style="left:18px;top:729px;width:828px;height:1px;background:#d8d8d8"></div>
<div class="a" style="left:18px;top:750px;width:828px;height:1px;background:#d8d8d8"></div>
<svg class="a" style="left:22px;top:608px;" width="15" height="14"><use href="#exg" width="15" height="14"/></svg>
<div class="t" id="gh1" style="left:51px;top:610px;font-size:11px;color:#27304a;letter-spacing:-0.027px;">Severity</div>
<div class="t" id="gh2" style="left:104px;top:610px;font-size:11px;color:#27304a;letter-spacing:0.54px;">Info</div>
<div class="t" id="gh3" style="left:129px;top:610px;font-size:11px;color:#27304a;letter-spacing:-0.18px;">Server</div>
<div class="t" id="gh4" style="left:232px;top:610px;font-size:11px;color:#27304a;letter-spacing:-0.66px;">Time</div>
<div class="t" id="gh5" style="left:327px;top:610px;font-size:11px;color:#27304a;letter-spacing:-0.324px;">Origin</div>
<div class="t" id="gh6" style="left:550px;top:610px;font-size:11px;color:#27304a;letter-spacing:0.155px;">Instance</div>
<div class="t" id="gh7" style="left:648px;top:610px;font-size:11px;color:#27304a;letter-spacing:-0.48px;">Alarm Message</div>
<svg class="a" style="left:24px;top:628px;" width="15" height="14"><use href="#exg" width="15" height="14"/></svg>
<svg class="a" style="left:67px;top:629px;" width="14" height="13"><use href="#warn" width="14" height="13"/></svg>
<svg class="a" style="left:108px;top:628px;" width="14" height="14"><use href="#info" width="14" height="14"/></svg>
<div class="t" id="srv0" style="left:131px;top:629px;font-size:11px;color:#27304a;letter-spacing:-0.526px;">ZHUVM-FOG-2927</div>
<div class="t" id="tm0" style="left:234px;top:629px;font-size:11px;color:#27304a;letter-spacing:-0.064px;">3/16/16 9:15 PM</div>
<div class="t" id="org0" style="left:328px;top:629px;font-size:11px;color:#27304a;letter-spacing:-0.472px;">EXC ADAccess Process LDAP Read Time</div>
<div class="t" id="inst0" style="left:553px;top:629px;font-size:11px;color:#27304a;letter-spacing:-0.026px;">w3wp OWA _Total</div>
<div class="a" style="left:646px;top:625px;width:200px;height:20px;overflow:hidden">
<div class="t" id="msg0" style="left:4px;top:4px;font-size:11px;color:#27304a;letter-spacing:-0.37px;"><span id="msg0p">The AD Access Process LDAP Readtime</span> <span style="margin-left:1px">of</span></div>
</div>
<svg class="a" style="left:24px;top:649px;" width="15" height="14"><use href="#exg" width="15" height="14"/></svg>
<svg class="a" style="left:67px;top:650px;" width="14" height="13"><use href="#warn" width="14" height="13"/></svg>
<svg class="a" style="left:108px;top:649px;" width="14" height="14"><use href="#info" width="14" height="14"/></svg>
<div class="t" id="srv1" style="left:129px;top:650px;font-size:11px;color:#27304a;letter-spacing:-0.83px;">EXC2013-SERVER</div>
<div class="t" id="tm1" style="left:234px;top:650px;font-size:11px;color:#27304a;letter-spacing:-0.064px;">3/16/16 8:34 PM</div>
<div class="t" id="org1" style="left:328px;top:650px;font-size:11px;color:#27304a;letter-spacing:-0.406px;">EXC IS MailSubmission Failed Submissions/sec</div>
<div class="t" id="inst1" style="left:552px;top:650px;font-size:11px;color:#8a8a8a;letter-spacing:0.72px;">n/a</div>
<div class="a" style="left:646px;top:646px;width:200px;height:20px;overflow:hidden">
<div class="t" id="msg1" style="left:4px;top:4px;font-size:11px;color:#27304a;letter-spacing:-0.458px;"><span id="msg1p">Some IS MailSubmission Failed Submissio</span>ns</div>
</div>
<svg class="a" style="left:24px;top:670px;" width="15" height="14"><use href="#exg" width="15" height="14"/></svg>
<svg class="a" style="left:67px;top:671px;" width="14" height="13"><use href="#warn" width="14" height="13"/></svg>
<svg class="a" style="left:108px;top:670px;" width="14" height="14"><use href="#info" width="14" height="14"/></svg>
<div class="t" id="srv2" style="left:129px;top:671px;font-size:11px;color:#27304a;letter-spacing:-0.83px;">EXC2013-SERVER</div>
<div class="t" id="tm2" style="left:234px;top:671px;font-size:11px;color:#27304a;letter-spacing:-0.064px;">3/16/16 6:04 PM</div>
<div class="t" id="org2" style="left:328px;top:671px;font-size:11px;color:#27304a;letter-spacing:-0.406px;">EXC IS MailSubmission Failed Submissions/sec</div>
<div class="t" id="inst2" style="left:552px;top:671px;font-size:11px;color:#8a8a8a;letter-spacing:0.72px;">n/a</div>
<div class="a" style="left:646px;top:667px;width:200px;height:20px;overflow:hidden">
<div class="t" id="msg2" style="left:4px;top:4px;font-size:11px;color:#27304a;letter-spacing:-0.458px;"><span id="msg2p">Some IS MailSubmission Failed Submissio</span>ns</div>
</div>
<svg class="a" style="left:24px;top:691px;" width="15" height="14"><use href="#exg" width="15" height="14"/></svg>
<svg class="a" style="left:67px;top:692px;" width="14" height="13"><use href="#warn" width="14" height="13"/></svg>
<svg class="a" style="left:108px;top:691px;" width="14" height="14"><use href="#info" width="14" height="14"/></svg>
<div class="t" id="srv3" style="left:131px;top:692px;font-size:11px;color:#27304a;letter-spacing:-0.526px;">ZHUVM-FOG-2927</div>
<div class="t" id="tm3" style="left:234px;top:692px;font-size:11px;color:#27304a;letter-spacing:-0.012px;">3/16/16 10:52 AM</div>
<div class="t" id="org3" style="left:328px;top:692px;font-size:11px;color:#27304a;letter-spacing:-0.406px;">EXC IS MailSubmission Failed Submissions/sec</div>
<div class="t" id="inst3" style="left:552px;top:692px;font-size:11px;color:#8a8a8a;letter-spacing:0.72px;">n/a</div>
<div class="a" style="left:646px;top:688px;width:200px;height:20px;overflow:hidden">
<div class="t" id="msg3" style="left:4px;top:4px;font-size:11px;color:#27304a;letter-spacing:-0.458px;"><span id="msg3p">Some IS MailSubmission Failed Submissio</span>ns</div>
</div>
<svg class="a" style="left:24px;top:712px;" width="15" height="14"><use href="#exg" width="15" height="14"/></svg>
<svg class="a" style="left:67px;top:713px;" width="14" height="13"><use href="#warn" width="14" height="13"/></svg>
<svg class="a" style="left:108px;top:712px;" width="14" height="14"><use href="#info" width="14" height="14"/></svg>
<div class="t" id="srv4" style="left:131px;top:713px;font-size:11px;color:#27304a;letter-spacing:-0.695px;">ZHUVM-DAG10-MB2</div>
<div class="t" id="tm4" style="left:234px;top:713px;font-size:11px;color:#27304a;letter-spacing:-0.039px;">1/28/16 3:16 PM</div>
<div class="t" id="org4" style="left:328px;top:713px;font-size:11px;color:#27304a;letter-spacing:-0.184px;">EXC Information Store VM Total Free Blocks</div>
<div class="t" id="inst4" style="left:553px;top:713px;font-size:11px;color:#27304a;letter-spacing:-0.219px;">zhuvm-dag10-mb2</div>
<div class="a" style="left:646px;top:709px;width:200px;height:20px;overflow:hidden">
<div class="t" id="msg4" style="left:4px;top:4px;font-size:11px;color:#27304a;letter-spacing:-0.259px;"><span id="msg4p">The Information Store VM Total Free Blo</span>cks</div>
</div>
<svg class="a" style="left:24px;top:733px;" width="15" height="14"><use href="#exg" width="15" height="14"/></svg>
<svg class="a" style="left:66px;top:732px;" width="16" height="16"><use href="#diaor" width="16" height="16"/></svg>
<svg class="a" style="left:108px;top:733px;" width="14" height="14"><use href="#info" width="14" height="14"/></svg>
<div class="t" id="srv5" style="left:129px;top:734px;font-size:11px;color:#27304a;letter-spacing:-0.872px;">EXC2016SERVER</div>
<div class="t" id="tm5" style="left:234px;top:734px;font-size:11px;color:#27304a;letter-spacing:-0.039px;">1/25/16 5:03 PM</div>
<div class="t" id="org5" style="left:329px;top:734px;font-size:11px;color:#27304a;letter-spacing:-0.067px;">ActiveSync Connectivity Test Failure</div>
<div class="t" id="inst5" style="left:552px;top:734px;font-size:11px;color:#8a8a8a;letter-spacing:0.72px;">n/a</div>
<div class="a" style="left:646px;top:730px;width:200px;height:20px;overflow:hidden">
<div class="t" id="msg5" style="left:4px;top:4px;font-size:11px;color:#27304a;letter-spacing:-0.136px;"><span id="msg5p">ActiveSync connetivity test failed on exc</span>2016</div>
</div>
<div class="a" style="left:846px;top:625px;width:15px;height:132px;background:#f0f0f0"></div>
<div class="a" style="left:846px;top:640px;width:15px;height:117px;border:1px solid #a8b0b8;background:linear-gradient(90deg,#f8f8f8,#e4e4e4)"></div>
<svg class="a" style="left:851px;top:631px" width="6" height="4"><path d="M0 3.5H6L3 0Z" fill="#303030"/></svg>
<div class="a" style="left:846px;top:757px;width:15px;height:16px;background:#eeeeee"></div>
<svg class="a" style="left:851px;top:764px" width="6" height="4"><path d="M0 0H6L3 3.5Z" fill="#303030"/></svg>
<div class="a" style="left:18px;top:757px;width:828px;height:16px;background:#eaeaea"></div>
<svg class="a" style="left:24px;top:761px" width="5" height="7"><path d="M5 0V7L0 3.5Z" fill="#303030"/></svg>
<div class="a" style="left:36px;top:757px;width:192px;height:15px;border:1px solid #8a8a8a;border-radius:2px;background:linear-gradient(#f6f6f6,#e8e8e8 50%,#c8c8c8)"></div>
<svg class="a" style="left:128px;top:761px" width="8" height="7"><path d="M1 0V7M4 0V7M7 0V7" stroke="#505050" stroke-width="1"/></svg>
<svg class="a" style="left:836px;top:761px" width="5" height="7"><path d="M0 0V7L5 3.5Z" fill="#303030"/></svg>
</body></html>
